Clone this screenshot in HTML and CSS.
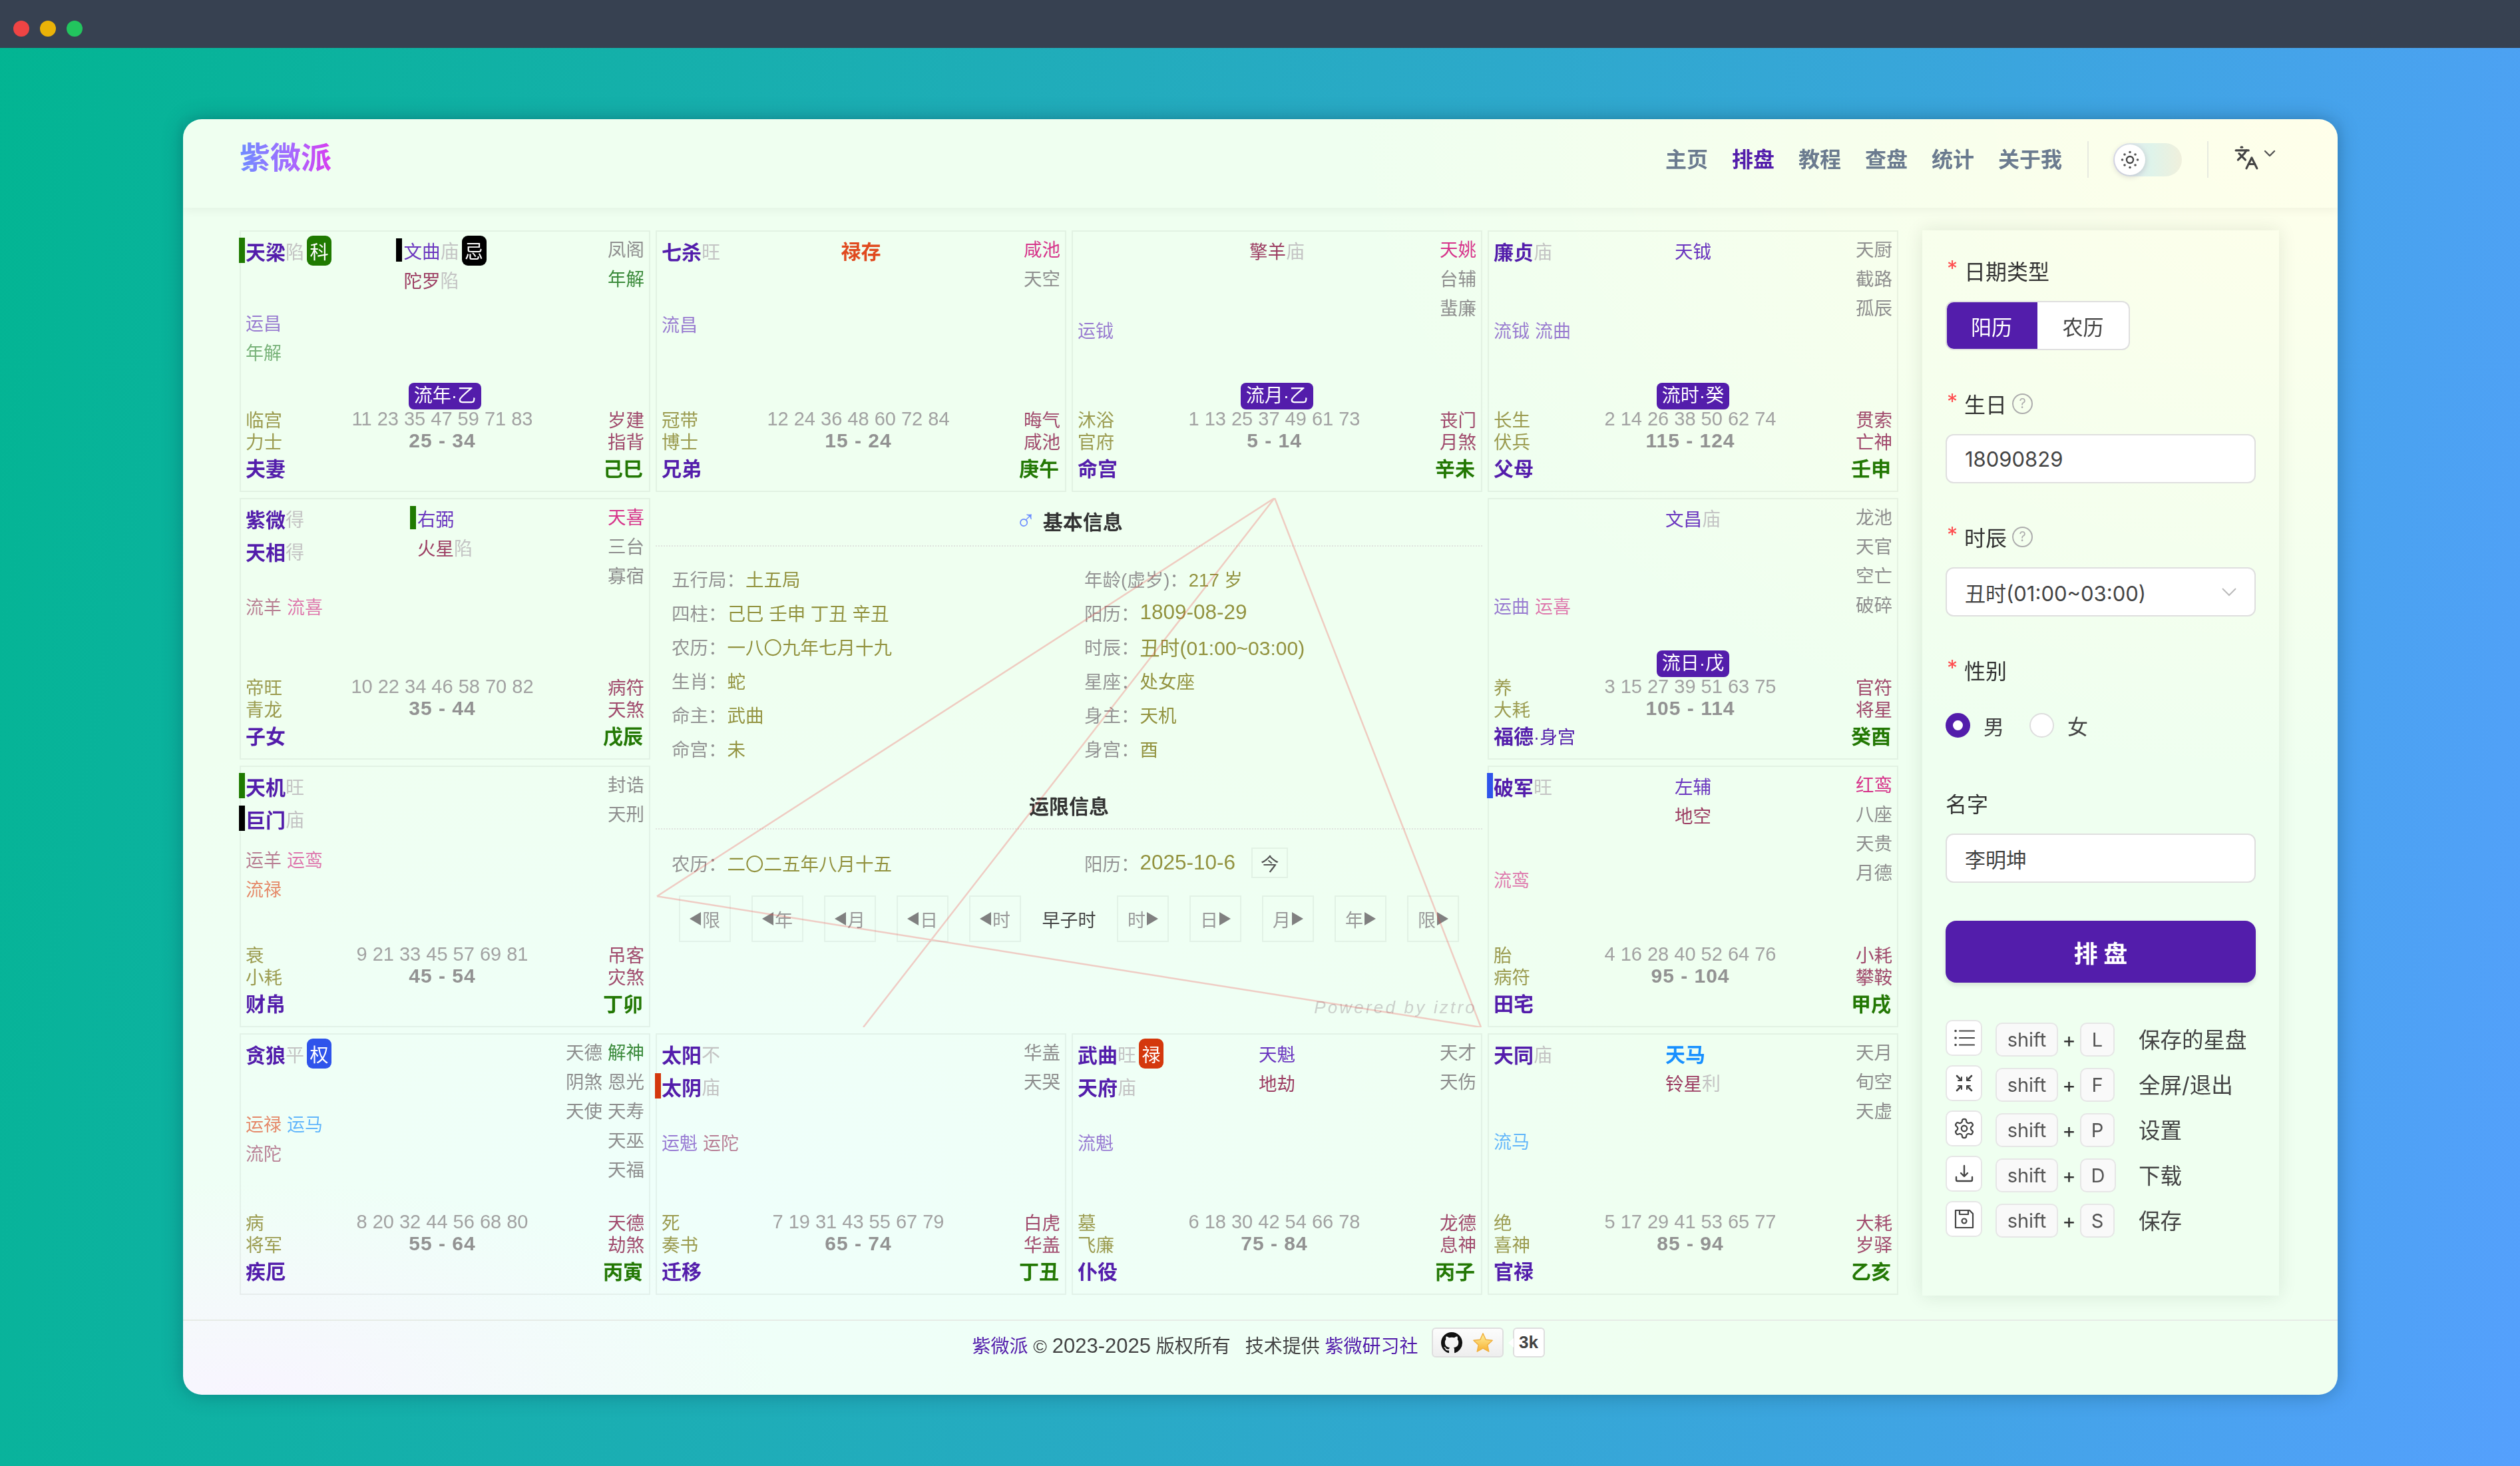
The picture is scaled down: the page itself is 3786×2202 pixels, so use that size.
FILE: index.html
```html
<!DOCTYPE html>
<html lang="zh-CN">
<head>
    <meta charset="UTF-8">
    <title>紫微派</title>
    <link rel="stylesheet" href="styles.css">
</head>
<body>
    <div class="titlebar">
        <span class="dot red"></span>
        <span class="dot yellow"></span>
        <span class="dot green"></span>
    </div>

    <div class="window">
        <header class="header">
            <div class="logo">紫微派</div>
            <nav class="nav">
                <a>主页</a>
                <a class="active">排盘</a>
                <a>教程</a>
                <a>查盘</a>
                <a>统计</a>
                <a>关于我</a>
            </nav>
            <span class="vline"></span>
            <div class="toggle">
                <span class="knob">
                    <svg width="32" height="32" viewBox="0 0 32 32" fill="#555" stroke="none">
                        <circle cx="16" cy="16" r="5" fill="none" stroke="#444" stroke-width="2.4"/>
                        <circle cx="16" cy="4.5" r="1.8"/>
                        <circle cx="16" cy="27.5" r="1.8"/>
                        <circle cx="4.5" cy="16" r="1.8"/>
                        <circle cx="27.5" cy="16" r="1.8"/>
                        <circle cx="8" cy="8" r="1.8"/>
                        <circle cx="24" cy="8" r="1.8"/>
                        <circle cx="8" cy="24" r="1.8"/>
                        <circle cx="24" cy="24" r="1.8"/>
                    </svg>
                </span>
            </div>
            <span class="vline"></span>
            <div class="lang">
                <svg width="38" height="38" viewBox="0 0 24 24" fill="none" stroke="#444" stroke-width="2" stroke-linecap="round" stroke-linejoin="round">
                    <path d="m5 8 6 6"/><path d="m4 14 6-6 2-3"/><path d="M2 5h12"/><path d="M7 2h1"/><path d="m22 22-5-10-5 10"/><path d="M14 18h6"/>
                </svg>
                <svg class="lang-arrow" width="20" height="12" viewBox="0 0 20 12" fill="none" stroke="#555" stroke-width="2.4" stroke-linecap="round" stroke-linejoin="round">
                    <path d="m3 2 7 7 7-7"/>
                </svg>
            </div>
        </header>

        <main class="main">
            <section class="chart">

                <div class="cell fuqi">
                    <div class="stars">
                        <div class="col-major">
                            <div class="major"><span class="mark m-green"></span>天梁<i>陷</i><b class="sihua m-green">科</b></div>
                        </div>
                        <div class="col-minor">
                            <div class="minor soft"><span class="mark m-black"></span>文曲<i>庙</i><b class="sihua m-black">忌</b></div>
                            <div class="minor tough">陀罗<i>陷</i></div>
                        </div>
                        <div class="col-adj">
                            <div>凤阁</div>
                            <div class="luck">年解</div>
                        </div>
                    </div>
                    <div class="flows">
                        <div><span class="soft">运昌</span></div>
                        <div><span class="luck">年解</span></div>
                    </div>
                    <div class="foot">
                        <span class="tag">流年·乙</span>
                        <div class="foot-row"><span class="cs">临宫</span><span class="ages">11 23 35 47 59 71 83</span><span class="sui">岁建</span></div>
                        <div class="foot-row"><span class="cs">力士</span><b class="range">25 - 34</b><span class="sui">指背</span></div>
                        <div class="foot-name"><b class="palace">夫妻</b><b class="stem">己巳</b></div>
                    </div>
                </div>

                <div class="cell xiongdi">
                    <div class="stars">
                        <div class="col-major">
                            <div class="major">七杀<i>旺</i></div>
                        </div>
                        <div class="col-minor">
                            <div class="minor lu big">禄存</div>
                        </div>
                        <div class="col-adj">
                            <div class="peach">咸池</div>
                            <div>天空</div>
                        </div>
                    </div>
                    <div class="flows">
                        <div><span class="soft">流昌</span></div>
                    </div>
                    <div class="foot">
                        <div class="foot-row"><span class="cs">冠带</span><span class="ages">12 24 36 48 60 72 84</span><span class="sui">晦气</span></div>
                        <div class="foot-row"><span class="cs">博士</span><b class="range">15 - 24</b><span class="sui">咸池</span></div>
                        <div class="foot-name"><b class="palace">兄弟</b><b class="stem">庚午</b></div>
                    </div>
                </div>

                <div class="cell ming">
                    <div class="stars">
                        <div class="col-major"></div>
                        <div class="col-minor">
                            <div class="minor tough">擎羊<i>庙</i></div>
                        </div>
                        <div class="col-adj">
                            <div class="peach">天姚</div>
                            <div>台辅</div>
                            <div>蜚廉</div>
                        </div>
                    </div>
                    <div class="flows">
                        <div><span class="soft">运钺</span></div>
                    </div>
                    <div class="foot">
                        <span class="tag">流月·乙</span>
                        <div class="foot-row"><span class="cs">沐浴</span><span class="ages">1 13 25 37 49 61 73</span><span class="sui">丧门</span></div>
                        <div class="foot-row"><span class="cs">官府</span><b class="range">5 - 14</b><span class="sui">月煞</span></div>
                        <div class="foot-name"><b class="palace">命宫</b><b class="stem">辛未</b></div>
                    </div>
                </div>

                <div class="cell fumu">
                    <div class="stars">
                        <div class="col-major">
                            <div class="major">廉贞<i>庙</i></div>
                        </div>
                        <div class="col-minor">
                            <div class="minor soft">天钺</div>
                        </div>
                        <div class="col-adj">
                            <div>天厨</div>
                            <div>截路</div>
                            <div>孤辰</div>
                        </div>
                    </div>
                    <div class="flows">
                        <div><span class="soft">流钺</span><span class="soft">流曲</span></div>
                    </div>
                    <div class="foot">
                        <span class="tag">流时·癸</span>
                        <div class="foot-row"><span class="cs">长生</span><span class="ages">2 14 26 38 50 62 74</span><span class="sui">贯索</span></div>
                        <div class="foot-row"><span class="cs">伏兵</span><b class="range">115 - 124</b><span class="sui">亡神</span></div>
                        <div class="foot-name"><b class="palace">父母</b><b class="stem">壬申</b></div>
                    </div>
                </div>

                <div class="cell zinv">
                    <div class="stars">
                        <div class="col-major">
                            <div class="major">紫微<i>得</i></div>
                            <div class="major">天相<i>得</i></div>
                        </div>
                        <div class="col-minor">
                            <div class="minor soft"><span class="mark m-green"></span>右弼</div>
                            <div class="minor tough">火星<i>陷</i></div>
                        </div>
                        <div class="col-adj">
                            <div class="peach">天喜</div>
                            <div>三台</div>
                            <div>寡宿</div>
                        </div>
                    </div>
                    <div class="flows">
                        <div><span class="tough">流羊</span><span class="peach">流喜</span></div>
                    </div>
                    <div class="foot">
                        <div class="foot-row"><span class="cs">帝旺</span><span class="ages">10 22 34 46 58 70 82</span><span class="sui">病符</span></div>
                        <div class="foot-row"><span class="cs">青龙</span><b class="range">35 - 44</b><span class="sui">天煞</span></div>
                        <div class="foot-name"><b class="palace">子女</b><b class="stem">戊辰</b></div>
                    </div>
                </div>

                <div class="center">
                    <div class="info-title"><span class="male">♂</span>基本信息</div>
                    <div class="info-grid">
                        <div><span class="k">五行局：</span><span class="v">土五局</span></div>
                        <div><span class="k">年龄(虚岁)：</span><span class="v">217 岁</span></div>
                        <div><span class="k">四柱：</span><span class="v">己巳 壬申 丁丑 辛丑</span></div>
                        <div><span class="k">阳历：</span><span class="v num">1809-08-29</span></div>
                        <div><span class="k">农历：</span><span class="v">一八〇九年七月十九</span></div>
                        <div><span class="k">时辰：</span><span class="v time">丑时(01:00~03:00)</span></div>
                        <div><span class="k">生肖：</span><span class="v">蛇</span></div>
                        <div><span class="k">星座：</span><span class="v">处女座</span></div>
                        <div><span class="k">命主：</span><span class="v">武曲</span></div>
                        <div><span class="k">身主：</span><span class="v">天机</span></div>
                        <div><span class="k">命宫：</span><span class="v">未</span></div>
                        <div><span class="k">身宫：</span><span class="v">酉</span></div>
                    </div>
                    <div class="info-title second">运限信息</div>
                    <div class="info-grid">
                        <div><span class="k">农历：</span><span class="v">二〇二五年八月十五</span></div>
                        <div><span class="k">阳历：</span><span class="v num">2025-10-6</span><span class="today">今</span></div>
                    </div>
                    <div class="stepper">
                        <span class="step"><i class="tri-l"></i>限</span>
                        <span class="step"><i class="tri-l"></i>年</span>
                        <span class="step"><i class="tri-l"></i>月</span>
                        <span class="step"><i class="tri-l"></i>日</span>
                        <span class="step"><i class="tri-l"></i>时</span>
                        <span class="step-now">早子时</span>
                        <span class="step">时<i class="tri-r"></i></span>
                        <span class="step">日<i class="tri-r"></i></span>
                        <span class="step">月<i class="tri-r"></i></span>
                        <span class="step">年<i class="tri-r"></i></span>
                        <span class="step">限<i class="tri-r"></i></span>
                    </div>
                    <div class="powered">Powered by iztro</div>
                    <svg class="sanfang" viewBox="0 0 1242 796" preserveAspectRatio="none">
                        <path d="M930 0 2 599M930 0 1240 796M2 599 1240 796M930 0 312 796"/>
                    </svg>
                </div>

                <div class="cell fude">
                    <div class="stars">
                        <div class="col-major"></div>
                        <div class="col-minor">
                            <div class="minor soft">文昌<i>庙</i></div>
                        </div>
                        <div class="col-adj">
                            <div>龙池</div>
                            <div>天官</div>
                            <div>空亡</div>
                            <div>破碎</div>
                        </div>
                    </div>
                    <div class="flows">
                        <div><span class="soft">运曲</span><span class="peach">运喜</span></div>
                    </div>
                    <div class="foot">
                        <span class="tag">流日·戊</span>
                        <div class="foot-row"><span class="cs">养</span><span class="ages">3 15 27 39 51 63 75</span><span class="sui">官符</span></div>
                        <div class="foot-row"><span class="cs">大耗</span><b class="range">105 - 114</b><span class="sui">将星</span></div>
                        <div class="foot-name"><b class="palace">福德<em>·身宫</em></b><b class="stem">癸酉</b></div>
                    </div>
                </div>

                <div class="cell caibo">
                    <div class="stars">
                        <div class="col-major">
                            <div class="major"><span class="mark m-green"></span>天机<i>旺</i></div>
                            <div class="major"><span class="mark m-black"></span>巨门<i>庙</i></div>
                        </div>
                        <div class="col-minor"></div>
                        <div class="col-adj">
                            <div>封诰</div>
                            <div>天刑</div>
                        </div>
                    </div>
                    <div class="flows">
                        <div><span class="tough">运羊</span><span class="peach">运鸾</span></div>
                        <div><span class="lu">流禄</span></div>
                    </div>
                    <div class="foot">
                        <div class="foot-row"><span class="cs">衰</span><span class="ages">9 21 33 45 57 69 81</span><span class="sui">吊客</span></div>
                        <div class="foot-row"><span class="cs">小耗</span><b class="range">45 - 54</b><span class="sui">灾煞</span></div>
                        <div class="foot-name"><b class="palace">财帛</b><b class="stem">丁卯</b></div>
                    </div>
                </div>

                <div class="cell tianzhai">
                    <div class="stars">
                        <div class="col-major">
                            <div class="major"><span class="mark m-blue"></span>破军<i>旺</i></div>
                        </div>
                        <div class="col-minor">
                            <div class="minor soft">左辅</div>
                            <div class="minor tough">地空</div>
                        </div>
                        <div class="col-adj">
                            <div class="peach">红鸾</div>
                            <div>八座</div>
                            <div>天贵</div>
                            <div>月德</div>
                        </div>
                    </div>
                    <div class="flows">
                        <div><span class="peach">流鸾</span></div>
                    </div>
                    <div class="foot">
                        <div class="foot-row"><span class="cs">胎</span><span class="ages">4 16 28 40 52 64 76</span><span class="sui">小耗</span></div>
                        <div class="foot-row"><span class="cs">病符</span><b class="range">95 - 104</b><span class="sui">攀鞍</span></div>
                        <div class="foot-name"><b class="palace">田宅</b><b class="stem">甲戌</b></div>
                    </div>
                </div>

                <div class="cell jie">
                    <div class="stars">
                        <div class="col-major">
                            <div class="major">贪狼<i>平</i><b class="sihua m-blue">权</b></div>
                        </div>
                        <div class="col-minor"></div>
                        <div class="col-adj">
                            <div>天德<span class="luck pair">解神</span></div>
                            <div>阴煞<span class="pair">恩光</span></div>
                            <div>天使<span class="pair">天寿</span></div>
                            <div>天巫</div>
                            <div>天福</div>
                        </div>
                    </div>
                    <div class="flows">
                        <div><span class="lu">运禄</span><span class="ma">运马</span></div>
                        <div><span class="tough">流陀</span></div>
                    </div>
                    <div class="foot">
                        <div class="foot-row"><span class="cs">病</span><span class="ages">8 20 32 44 56 68 80</span><span class="sui">天德</span></div>
                        <div class="foot-row"><span class="cs">将军</span><b class="range">55 - 64</b><span class="sui">劫煞</span></div>
                        <div class="foot-name"><b class="palace">疾厄</b><b class="stem">丙寅</b></div>
                    </div>
                </div>

                <div class="cell qianyi">
                    <div class="stars">
                        <div class="col-major">
                            <div class="major">太阳<i>不</i></div>
                            <div class="major"><span class="mark m-red"></span>太阴<i>庙</i></div>
                        </div>
                        <div class="col-minor"></div>
                        <div class="col-adj">
                            <div>华盖</div>
                            <div>天哭</div>
                        </div>
                    </div>
                    <div class="flows">
                        <div><span class="soft">运魁</span><span class="tough">运陀</span></div>
                    </div>
                    <div class="foot">
                        <div class="foot-row"><span class="cs">死</span><span class="ages">7 19 31 43 55 67 79</span><span class="sui">白虎</span></div>
                        <div class="foot-row"><span class="cs">奏书</span><b class="range">65 - 74</b><span class="sui">华盖</span></div>
                        <div class="foot-name"><b class="palace">迁移</b><b class="stem">丁丑</b></div>
                    </div>
                </div>

                <div class="cell puyi">
                    <div class="stars">
                        <div class="col-major">
                            <div class="major">武曲<i>旺</i><b class="sihua m-red">禄</b></div>
                            <div class="major">天府<i>庙</i></div>
                        </div>
                        <div class="col-minor">
                            <div class="minor soft">天魁</div>
                            <div class="minor tough">地劫</div>
                        </div>
                        <div class="col-adj">
                            <div>天才</div>
                            <div>天伤</div>
                        </div>
                    </div>
                    <div class="flows">
                        <div><span class="soft">流魁</span></div>
                    </div>
                    <div class="foot">
                        <div class="foot-row"><span class="cs">墓</span><span class="ages">6 18 30 42 54 66 78</span><span class="sui">龙德</span></div>
                        <div class="foot-row"><span class="cs">飞廉</span><b class="range">75 - 84</b><span class="sui">息神</span></div>
                        <div class="foot-name"><b class="palace">仆役</b><b class="stem">丙子</b></div>
                    </div>
                </div>

                <div class="cell guanlu">
                    <div class="stars">
                        <div class="col-major">
                            <div class="major">天同<i>庙</i></div>
                        </div>
                        <div class="col-minor">
                            <div class="minor ma big">天马</div>
                            <div class="minor tough">铃星<i>利</i></div>
                        </div>
                        <div class="col-adj">
                            <div>天月</div>
                            <div>旬空</div>
                            <div>天虚</div>
                        </div>
                    </div>
                    <div class="flows">
                        <div><span class="ma">流马</span></div>
                    </div>
                    <div class="foot">
                        <div class="foot-row"><span class="cs">绝</span><span class="ages">5 17 29 41 53 65 77</span><span class="sui">大耗</span></div>
                        <div class="foot-row"><span class="cs">喜神</span><b class="range">85 - 94</b><span class="sui">岁驿</span></div>
                        <div class="foot-name"><b class="palace">官禄</b><b class="stem">乙亥</b></div>
                    </div>
                </div>

            </section>

            <aside class="panel">
                <div class="field">
                    <label class="label"><span class="req">*</span>日期类型</label>
                    <div class="segment">
                        <span class="seg on">阳历</span>
                        <span class="seg">农历</span>
                    </div>
                </div>
                <div class="field">
                    <label class="label"><span class="req">*</span>生日<span class="help">?</span></label>
                    <div class="input">18090829</div>
                </div>
                <div class="field">
                    <label class="label"><span class="req">*</span>时辰<span class="help">?</span></label>
                    <div class="input">
                        丑时(01:00~03:00)
                        <svg class="select-arrow" width="24" height="14" viewBox="0 0 24 14" fill="none" stroke="#bbb" stroke-width="2">
                            <path d="m2 2 10 10L22 2"/>
                        </svg>
                    </div>
                </div>
                <div class="field">
                    <label class="label"><span class="req">*</span>性别</label>
                    <div class="radios">
                        <span class="radio on"></span><span class="radio-text">男</span>
                        <span class="radio"></span><span class="radio-text">女</span>
                    </div>
                </div>
                <div class="field last">
                    <label class="label plain">名字</label>
                    <div class="input">李明坤</div>
                </div>
                <button class="submit">排 盘</button>

                <div class="shortcuts">
                    <div class="sc">
                        <span class="sc-icon">
                            <svg width="32" height="32" viewBox="0 0 32 32" fill="none" stroke="#444" stroke-width="2.2" stroke-linecap="round">
                                <path d="M9 5.500h22M9 16h22M9 26.500h22"/>
                                <path d="M3 5.500h.1M3 16h.1M3 26.500h.1" stroke-width="3.600"/>
                            </svg>
                        </span>
                        <kbd class="key shift">shift</kbd><span class="plus">+</span><kbd class="key">L</kbd>
                        <span class="sc-label">保存的星盘</span>
                    </div>
                    <div class="sc">
                        <span class="sc-icon">
                            <svg width="32" height="32" viewBox="0 0 32 32" fill="none" stroke="#444" stroke-width="2.6" stroke-linecap="round" stroke-linejoin="round">
                                <path d="m5 5 6 6M27 5l-6 6M5 27l6-6M27 27l-6-6"/>
                                <path d="M12 7v5H7M20 7v5h5M12 25v-5H7M20 25v-5h5" stroke-width="2"/>
                            </svg>
                        </span>
                        <kbd class="key shift">shift</kbd><span class="plus">+</span><kbd class="key">F</kbd>
                        <span class="sc-label">全屏/退出</span>
                    </div>
                    <div class="sc">
                        <span class="sc-icon">
                            <svg width="34" height="34" viewBox="0 0 24 24" fill="none" stroke="#444" stroke-width="1.600" stroke-linecap="round" stroke-linejoin="round">
                                <path d="M12.220 2h-.44a2 2 0 0 0-2 2v.18a2 2 0 0 1-1 1.730l-.43.25a2 2 0 0 1-2 0l-.15-.08a2 2 0 0 0-2.730.73l-.22.38a2 2 0 0 0 .73 2.730l.15.1a2 2 0 0 1 1 1.720v.51a2 2 0 0 1-1 1.740l-.15.09a2 2 0 0 0-.73 2.730l.22.38a2 2 0 0 0 2.730.73l.15-.08a2 2 0 0 1 2 0l.43.25a2 2 0 0 1 1 1.730V20a2 2 0 0 0 2 2h.44a2 2 0 0 0 2-2v-.18a2 2 0 0 1 1-1.730l.43-.25a2 2 0 0 1 2 0l.15.08a2 2 0 0 0 2.730-.73l.22-.39a2 2 0 0 0-.73-2.730l-.15-.08a2 2 0 0 1-1-1.740v-.5a2 2 0 0 1 1-1.740l.15-.09a2 2 0 0 0 .73-2.730l-.22-.38a2 2 0 0 0-2.730-.73l-.15.08a2 2 0 0 1-2 0l-.43-.25a2 2 0 0 1-1-1.730V4a2 2 0 0 0-2-2z"/>
                                <circle cx="12" cy="12" r="3"/>
                            </svg>
                        </span>
                        <kbd class="key shift">shift</kbd><span class="plus">+</span><kbd class="key">P</kbd>
                        <span class="sc-label">设置</span>
                    </div>
                    <div class="sc">
                        <span class="sc-icon">
                            <svg width="32" height="32" viewBox="0 0 32 32" fill="none" stroke="#444" stroke-width="2.4" stroke-linecap="round" stroke-linejoin="round">
                                <path d="M16 4v15M11 15l5 5 5-5" />
                                <path d="M4 21v4a2 2 0 0 0 2 2h20a2 2 0 0 0 2-2v-4"/>
                            </svg>
                        </span>
                        <kbd class="key shift">shift</kbd><span class="plus">+</span><kbd class="key wide">D</kbd>
                        <span class="sc-label">下载</span>
                    </div>
                    <div class="sc">
                        <span class="sc-icon">
                            <svg width="32" height="32" viewBox="0 0 32 32" fill="none" stroke="#444" stroke-width="2.200" stroke-linejoin="round">
                                <path d="M3 3h21l5 5v21H3z"/>
                                <path d="M9 3v6h13V3"/>
                                <circle cx="16" cy="19" r="3.500"/>
                            </svg>
                        </span>
                        <kbd class="key shift">shift</kbd><span class="plus">+</span><kbd class="key">S</kbd>
                        <span class="sc-label">保存</span>
                    </div>
                </div>
            </aside>
        </main>

        <footer class="footer">
            <div class="footer-text"><a>紫微派</a> © <span class="year">2023-2025</span> 版权所有<span class="tech">技术提供</span> <a>紫微研习社</a></div>
            <div class="gh-btn">
                <svg width="32" height="32" viewBox="0 0 16 16" fill="#111">
                    <path d="M8 0C3.58 0 0 3.580 0 8c0 3.540 2.290 6.530 5.470 7.590.4.07.55-.17.55-.38 0-.19-.01-.82-.01-1.490-2.010.37-2.530-.49-2.690-.94-.09-.23-.48-.94-.82-1.130-.28-.15-.68-.52-.01-.53.63-.01 1.080.58 1.230.82.72 1.210 1.870.87 2.330.66.07-.52.28-.87.51-1.070-1.780-.2-3.640-.89-3.640-3.950 0-.87.31-1.590.82-2.150-.08-.2-.36-1.020.08-2.120 0 0 .67-.21 2.200.82.64-.18 1.320-.27 2-.27.68 0 1.360.09 2 .27 1.530-1.040 2.200-.82 2.200-.82.44 1.100.16 1.920.08 2.120.51.56.82 1.270.82 2.150 0 3.070-1.870 3.750-3.650 3.950.29.25.54.73.54 1.480 0 1.070-.01 1.930-.01 2.200 0 .21.15.46.55.38A8.013 8.013 0 0 0 16 8c0-4.420-3.580-8-8-8z"/>
                </svg>
                <svg width="34" height="34" viewBox="0 0 24 24" stroke="#f0b040" stroke-width="1" stroke-linejoin="round">
                    <defs>
                        <linearGradient id="starFill" x1="0" y1="0" x2="0" y2="1">
                            <stop offset="0" stop-color="#fff2a0"/>
                            <stop offset="1" stop-color="#f7b030"/>
                        </linearGradient>
                    </defs>
                    <path fill="url(#starFill)" d="m12 2 3 6.600 7 .8-5.200 4.800 1.400 7L12 17.700 5.800 21.200l1.400-7L2 9.400l7-.8z"/>
                </svg>
            </div>
            <div class="gh-count">3k</div>
        </footer>
    </div>
</body>
</html>
```

FILE: styles.css
```css
* {
    box-sizing: border-box;
}

body {
    margin: 0;
    width: 3786px;
    height: 2202px;
    overflow: hidden;
    font-family: "Liberation Sans", "Noto Sans CJK SC", sans-serif;
    background: linear-gradient(100deg, #02b592 0%, #3ba5de 73%, #55a0fd 100%);
}

.titlebar {
    height: 72px;
    background-color: #374151;
    display: flex;
    align-items: center;
    gap: 16px;
    padding: 14px 0 0 20px;
}

.dot {
    width: 24px;
    height: 24px;
    border-radius: 50%;
}

.dot.red { background-color: #ef4444; }
.dot.yellow { background-color: #eab308; }
.dot.green { background-color: #22c55e; }

.window {
    margin: 107px 0 0 275px;
    width: 3237px;
    height: 1916px;
    border-radius: 28px;
    box-shadow: 0 0 30px rgba(0, 50, 70, 0.35);
    background:
        radial-gradient(ellipse 800px 320px at 3% 100%, #f8f5ff, rgba(248, 245, 255, 0)),
        radial-gradient(ellipse 1500px 1000px at 100% 0%, #ffffea, rgba(255, 255, 234, 0)),
        radial-gradient(ellipse 1500px 800px at 25% 85%, #effffb, rgba(239, 255, 251, 0)),
        #effff0;
    display: flex;
    flex-direction: column;
    filter: blur(0.6px);
}

/* header */
.header {
    height: 133px;
    padding: 0 92px 18px 85px;
    display: flex;
    align-items: center;
    box-shadow: 0 4px 14px rgba(0, 0, 0, 0.05);
}

.logo {
    font-size: 46px;
    font-weight: 700;
    line-height: 60px;
    background: linear-gradient(90deg, #6f8cff, #a46bff 55%, #d83cf0);
    -webkit-background-clip: text;
    background-clip: text;
    color: transparent;
}

.nav {
    margin-left: auto;
    display: flex;
    gap: 36px;
    font-size: 32px;
    font-weight: 600;
    color: #6b7b8f;
}

.nav .active {
    color: #531dab;
    font-weight: 700;
}

.vline {
    width: 2px;
    height: 55px;
    margin-top: 6px;
    background-color: #e7eae0;
}

.nav + .vline {
    margin-left: 38px;
}

.toggle {
    width: 103px;
    height: 50px;
    margin: 6px 38px 0 37px;
    padding: 2px;
    border-radius: 25px;
    background: linear-gradient(90deg, #e2e4f0, #def3ea 55%, #f0f0dc);
}

.knob {
    width: 46px;
    height: 46px;
    border-radius: 50%;
    background-color: #fff;
    box-shadow: 0 2px 8px rgba(60, 40, 90, 0.22);
    display: flex;
    align-items: center;
    justify-content: center;
}

.lang {
    margin-left: 38px;
    display: flex;
    align-items: center;
    gap: 6px;
}

.lang-arrow {
    margin-top: -12px;
}

/* main */
.main {
    height: 1670px;
    padding: 34px 88px 0 85px;
    display: flex;
    gap: 36px;
}

.chart {
    width: 2492px;
    height: 1599px;
    display: grid;
    grid-template-columns: repeat(4, 617px);
    grid-template-rows: repeat(4, 393px);
    column-gap: 8px;
    row-gap: 9px;
}

.cell {
    border: 2px solid rgba(120, 130, 120, 0.1);
    padding: 6px 7px 0 7px;
    display: flex;
    flex-direction: column;
    font-size: 27.500px;
}

.stars {
    display: grid;
    grid-template-columns: 1fr auto 1fr;
}

.fuqi .stars { height: 111px; }
.xiongdi .stars { height: 113px; }
.ming .stars, .fumu .stars { height: 122px; }
.zinv .stars { height: 135px; }
.fude .stars, .guanlu .stars { height: 134px; }
.caibo .stars { height: 113px; }
.tianzhai .stars { height: 143px; }
.jie .stars { height: 108px; }
.qianyi .stars, .puyi .stars { height: 136px; }

.col-major {
    margin-top: -2px;
}

.major {
    position: relative;
    height: 49px;
    display: flex;
    align-items: center;
    font-size: 30px;
    font-weight: 700;
    color: #531dab;
    white-space: nowrap;
}

.major i, .minor i {
    font-style: normal;
    font-weight: 400;
    color: #c4c4c4;
    font-size: 28px;
}

.minor {
    position: relative;
    height: 44px;
    display: flex;
    align-items: center;
    white-space: nowrap;
}

.minor.big {
    font-size: 30px;
    font-weight: 700;
}

.soft { color: #6a35bf; }
.tough { color: #9c3d62; }
.peach { color: #d6338a; }
.lu { color: #e0491e; }
.ma { color: #1890ff; }
.luck { color: #3a8a3a; }

.mark {
    position: absolute;
    left: -10px;
    top: 5px;
    width: 9px;
    height: 38px;
}

.minor .mark {
    left: -11px;
    top: 4px;
    height: 35px;
}

.m-green { background-color: #1f7a00; }
.m-black { background-color: #000; }
.m-blue { background-color: #2f54eb; }
.m-red { background-color: #d4380d; }

.sihua {
    width: 37px;
    height: 45px;
    margin-left: 4px;
    border-radius: 9px;
    color: #fff;
    font-size: 28px;
    font-weight: 400;
    display: flex;
    align-items: center;
    justify-content: center;
}

.col-adj {
    text-align: right;
    color: #8e8e8e;
    line-height: 44px;
    white-space: nowrap;
}

.pair {
    margin-left: 8px;
}

.col-adj .pair:not(.luck) {
    color: #8e8e8e;
}

.flows {
    line-height: 44px;
    font-size: 27px;
}

.flows span {
    opacity: 0.65;
    margin-right: 8px;
}

.foot {
    margin-top: auto;
    padding-bottom: 15px;
    display: flex;
    flex-direction: column;
}

.tag {
    align-self: center;
    height: 40px;
    margin-bottom: -6px;
    padding: 0 8px;
    border-radius: 8px;
    background-color: #531dab;
    color: #fff;
    font-size: 28px;
    line-height: 40px;
    white-space: nowrap;
}

.foot-row {
    height: 33px;
    display: grid;
    grid-template-columns: 1fr auto 1fr;
    align-items: center;
}

.cs { color: #9b9b4f; }

.sui {
    color: #a04a6c;
    text-align: right;
}

.ages {
    padding-right: 8px;
    font-size: 29px;
    color: #a2a2a2;
    white-space: nowrap;
}

.range {
    padding-right: 8px;
    text-align: center;
    font-size: 30px;
    letter-spacing: 1px;
    color: #929292;
}

.foot-name {
    margin-top: 7px;
    height: 40px;
    display: flex;
    justify-content: space-between;
    align-items: center;
    font-size: 30px;
}

.palace { color: #531dab; }

.palace em {
    font-style: normal;
    font-weight: 400;
    font-size: 27px;
}

.stem {
    color: #237804;
    margin-right: 2px;
}

/* center */
.center {
    position: relative;
    grid-column: 2 / 4;
    grid-row: 2 / 4;
    font-size: 27.500px;
}

.info-title {
    height: 73px;
    padding-bottom: 3px;
    border-bottom: 2px dotted #dfe3de;
    display: flex;
    align-items: center;
    justify-content: center;
    font-size: 30px;
    font-weight: 700;
    color: #333;
}

.info-title.second {
    margin-top: 21px;
    height: 76px;
    padding: 4px 0 0;
}

.male {
    color: #6b8cff;
    font-size: 42px;
    line-height: 40px;
    font-weight: 400;
    margin-right: 10px;
}

.info-grid {
    padding: 22px 0 0 24px;
    display: grid;
    grid-template-columns: 620px 1fr;
    grid-auto-rows: 51px;
    align-items: center;
}

.second + .info-grid {
    padding-top: 24px;
}

.info-grid > div {
    display: flex;
    align-items: center;
}

.k {
    color: #949494;
    margin-right: 1px;
}

.v {
    color: #939340;
    white-space: pre;
}

.v.num { font-size: 31.500px; }
.v.time { font-size: 30px; }

.today {
    width: 55px;
    height: 46px;
    margin-left: 24px;
    border: 2px solid rgba(120, 130, 120, 0.1);
    display: flex;
    align-items: center;
    justify-content: center;
    color: #555;
}

.stepper {
    margin-top: 24px;
    height: 70px;
    display: flex;
    justify-content: center;
    gap: 31px;
}

.step {
    width: 78px;
    height: 70px;
    border: 2px solid rgba(120, 130, 120, 0.1);
    display: flex;
    align-items: center;
    justify-content: center;
    gap: 2px;
    color: #9a9a9a;
    font-size: 27px;
}

.step-now {
    width: 100px;
    display: flex;
    align-items: center;
    justify-content: center;
    margin: 0 -9px;
    color: #444;
    font-size: 27px;
}

.tri-l, .tri-r {
    width: 0;
    height: 0;
    border-top: 10px solid transparent;
    border-bottom: 10px solid transparent;
}

.tri-l { border-right: 17px solid #808080; }
.tri-r { border-left: 17px solid #808080; }

.powered {
    position: absolute;
    right: 8px;
    bottom: 14px;
    font-style: italic;
    font-size: 26px;
    letter-spacing: 3.200px;
    color: #cbd0cb;
}

.sanfang {
    position: absolute;
    left: 0;
    top: 0;
    width: 100%;
    height: 100%;
    pointer-events: none;
}

.sanfang path {
    fill: none;
    stroke: #ef4444;
    stroke-opacity: 0.27;
    stroke-width: 2.500;
}

/* form panel */
.panel {
    width: 536px;
    height: 1600px;
    padding: 40px 35px 0;
    box-shadow: 0 0 26px rgba(30, 50, 30, 0.11);
    font-family: Inter, "Noto Sans CJK SC", sans-serif;
    font-size: 31px;
    color: #444;
}

.field {
    height: 200px;
}

.field.last {
    height: 197px;
}

.label {
    height: 40px;
    margin-bottom: 26px;
    display: flex;
    align-items: center;
    color: #333;
    font-size: 32px;
}

.req {
    width: 28px;
    padding-left: 2px;
    margin-top: -6px;
    color: #ff4d4f;
    font-size: 32px;
}

.help {
    width: 31px;
    height: 31px;
    margin-left: 8px;
    border: 2px solid #adadad;
    border-radius: 50%;
    display: flex;
    align-items: center;
    justify-content: center;
    color: #adadad;
    font-size: 20px;
}

.segment {
    width: 277px;
    height: 74px;
    display: flex;
    border: 2px solid #dfdfdf;
    border-radius: 12px;
    background-color: #fff;
    overflow: hidden;
}

.seg {
    flex: 1;
    display: flex;
    align-items: center;
    justify-content: center;
}

.seg.on {
    flex: none;
    width: 138px;
    margin: -2px 0 -2px -2px;
    background-color: #531dab;
    color: #fff;
}

.input {
    position: relative;
    height: 74px;
    padding: 0 27px;
    border: 2px solid #dfdfdf;
    border-radius: 12px;
    background-color: #fff;
    display: flex;
    align-items: center;
}

.select-arrow {
    position: absolute;
    right: 26px;
    top: 28px;
}

.radios {
    height: 74px;
    display: flex;
    align-items: center;
}

.radio {
    width: 37px;
    height: 37px;
    border: 2px solid #dedede;
    border-radius: 50%;
    background-color: #fff;
}

.radio.on {
    border: 11px solid #531dab;
}

.radio-text {
    margin: 0 38px 0 20px;
}

.submit {
    display: block;
    width: 100%;
    height: 93px;
    border: none;
    border-radius: 16px;
    background-color: #531dab;
    color: #fff;
    font-family: inherit;
    font-size: 36px;
    font-weight: 700;
    box-shadow: 0 4px 6px rgba(0, 0, 0, 0.1);
}

.shortcuts {
    margin-top: 56px;
    display: flex;
    flex-direction: column;
    gap: 14px;
}

.sc {
    height: 54px;
    display: flex;
    align-items: center;
}

.sc-icon {
    width: 55px;
    height: 54px;
    border: 2px solid #e6e6e6;
    border-radius: 10px;
    background-color: #fff;
    display: flex;
    align-items: center;
    justify-content: center;
}

.key {
    width: 52px;
    height: 51px;
    border: 2px solid #e6e6e6;
    border-radius: 10px;
    background-color: #f9f9f9;
    display: flex;
    align-items: center;
    justify-content: center;
    font-family: Inter, sans-serif;
    font-size: 29px;
    color: #555;
    margin-top: 4px;
}

.key.shift {
    width: 94px;
    margin-left: 20px;
}

.key.wide {
    width: 54px;
    margin-right: -2px;
}

.plus {
    width: 33px;
    margin-top: 4px;
    text-align: center;
    color: #333;
}

.sc-label {
    margin-left: 36px;
    font-size: 32.500px;
    white-space: nowrap;
}

/* footer */
.footer {
    flex: 1;
    border-top: 2px solid #e6ebe6;
    padding: 10px 6px 0 0;
    display: flex;
    justify-content: center;
    align-items: flex-start;
}

.footer-text {
    font-size: 28px;
    line-height: 56px;
    color: #444;
}

.footer-text a {
    color: #531dab;
}

.year {
    font-size: 31px;
}

.tech {
    margin-left: 22px;
}

.gh-btn {
    width: 108px;
    height: 45px;
    margin-left: 20px;
    border: 2px solid #dedede;
    border-radius: 6px;
    background: linear-gradient(#fcfcfc, #eeeeee);
    display: flex;
    align-items: center;
    justify-content: center;
    gap: 14px;
}

.gh-count {
    position: relative;
    width: 48px;
    height: 45px;
    margin-left: 14px;
    border: 2px solid #dedede;
    border-radius: 6px;
    background-color: #fff;
    display: flex;
    align-items: center;
    justify-content: center;
    font-size: 26px;
    font-weight: 700;
    color: #444;
}

.gh-count::before {
    content: "";
    position: absolute;
    left: -9px;
    top: 14px;
    width: 0;
    height: 0;
    border-top: 7px solid transparent;
    border-bottom: 7px solid transparent;
    border-right: 8px solid #fff;
}
```
